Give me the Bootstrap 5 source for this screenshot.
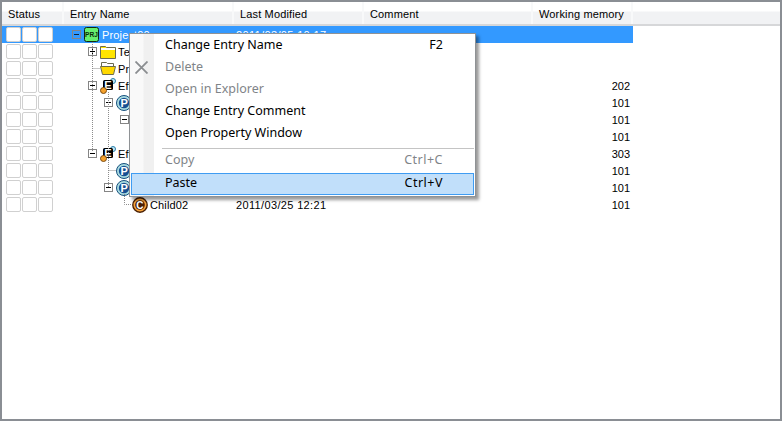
<!DOCTYPE html>
<html lang="en">
<head>
<meta charset="utf-8">
<title>Entry list</title>
<link href="https://cdn.jsdelivr.net/npm/bootstrap@5.3.0/dist/css/bootstrap.min.css" rel="stylesheet">
<style>
html,body{height:100%;}
body{background:#fff;overflow:hidden;font-family:"Liberation Sans",sans-serif;font-size:11px;letter-spacing:.15px;color:#000;line-height:18px;}
.shell{position:relative;height:421px;border:2px solid #8a8e94;}
.head-bar{height:24px;background:linear-gradient(#fff 0,#fff 9px,#f1f2f4 10px,#f1f2f4 100%);border-bottom:2px solid #d6d7d9;}
.hc{height:22px;line-height:24px;padding-left:6px;border-right:2px solid #f8f9fa;white-space:nowrap;}
.w-s{width:62px;flex:none;}
.w-n{width:170px;flex:none;}
.w-d{width:130px;flex:none;}
.w-c{width:169px;flex:none;}
.w-m{width:100px;flex:none;}
.grid-row{height:17px;width:631px;}
.grid-row.on{background:#3399ff;color:#fff;}
.stat{padding:1px 0 0 4px;gap:1px;}
.box{width:15px;height:15px;border:1px solid #d0d0d0;border-radius:2px;background:#fff;}
.tree{position:relative;gap:3px;white-space:nowrap;overflow:visible;}
.exp{width:9px;height:9px;border:1px solid #858585;background:#fff;position:relative;flex:none;}
.exp::before{content:"";position:absolute;left:1px;right:1px;top:3px;height:1px;background:#000;}
.exp.plus::after{content:"";position:absolute;top:1px;bottom:1px;left:3px;width:1px;background:#000;}
.on .exp{background:#3399ff;}
.on .exp::before{background:#123;}
.nopad{width:9px;flex:none;}
.ic{flex:none;display:block;}
.level1 .ic,.level2 .ic{margin-right:-1px;}
.num{letter-spacing:.35px;padding-left:2px;}
.memo{text-align:right;padding-right:3px;letter-spacing:0;}
.lines{position:absolute;left:0;top:0;pointer-events:none;}
.cmenu{position:absolute;left:127px;top:31px;width:347px;height:164px;background:#fff;border:1px solid #8f9295;box-shadow:3px 3px 3px rgba(0,0,0,.4);font-family:"Noto Sans",sans-serif;font-size:12.5px;letter-spacing:0;padding:1px;}
.gutter{position:absolute;left:0;top:0;bottom:0;width:24px;background:linear-gradient(90deg,#f9f9f9 0,#f9f9f9 13px,#f0f0f0 14px,#f0f0f0 100%);}
.mi{position:relative;height:22px;line-height:19px;padding:0 31px 0 34px;}
.mi.off{color:#7f8488;}
.sep{position:relative;height:1px;margin:3px 0 0 31px;background:#c4c4c4;}
.mi.cp{line-height:21px;}
.mi.act{height:22px;line-height:18px;margin-top:2px;background:#c1dffa;border:1px solid #3f9cf2;padding:0 30px 0 33px;}
.keytxt{letter-spacing:.5px;}
.xmark{position:absolute;left:5px;top:27px;}
.level0{padding-left:8px;}
.level1{padding-left:24px;}
.level2{padding-left:40px;}
.level3{padding-left:56px;}
.level3b{padding-left:68px;gap:2px;}
</style>
</head>
<body>
<div class="shell">
  <div class="head-bar d-flex">
    <div class="hc w-s">Status</div>
    <div class="hc w-n">Entry Name</div>
    <div class="hc w-d">Last Modified</div>
    <div class="hc w-c">Comment</div>
    <div class="hc w-m">Working memory</div>
  </div>
  <div>
    <div class="grid-row on d-flex">
      <div class="w-s stat d-flex"><span class="box"></span><span class="box"></span><span class="box"></span></div>
      <div class="w-n tree d-flex align-items-center level0"><span class="exp"></span><svg class="ic" width="15" height="15" viewBox="0 0 15 15"><rect x=".5" y=".5" width="14" height="14" rx="2" fill="#66f06e" stroke="#102810"/><text x="7.500" y="10" text-anchor="middle" font-family="Liberation Sans" font-weight="700" font-size="6.500" fill="#0b2a0b">PRJ</text></svg><span>Project00</span></div>
      <div class="w-d num">2011/03/05 10:17</div><div class="w-c"></div><div class="w-m memo"></div>
    </div>
    <div class="grid-row d-flex">
      <div class="w-s stat d-flex"><span class="box"></span><span class="box"></span><span class="box"></span></div>
      <div class="w-n tree d-flex align-items-center level1"><span class="exp plus"></span><svg class="ic" width="16" height="14" viewBox="0 0 16 14"><path d="M.5 1.500h5l1 1h9v11H.500z" fill="#ffe500" stroke="#6b6b50"/><path d="M1 3h14v2H1z" fill="#fff"/></svg><span>Test</span></div>
      <div class="w-d"></div><div class="w-c"></div><div class="w-m memo"></div>
    </div>
    <div class="grid-row d-flex">
      <div class="w-s stat d-flex"><span class="box"></span><span class="box"></span><span class="box"></span></div>
      <div class="w-n tree d-flex align-items-center level1"><span class="nopad"></span><svg class="ic" width="16" height="13" viewBox="0 0 16 13"><path d="M1.500 .5h5l1 1h6v4h-12z" fill="#fff" stroke="#6b6b50"/><path d="M.5 4.500h15l-2 8H2.500z" fill="#ffd800" stroke="#6b6b50"/></svg><span>Project</span></div>
      <div class="w-d"></div><div class="w-c"></div><div class="w-m memo"></div>
    </div>
    <div class="grid-row d-flex">
      <div class="w-s stat d-flex"><span class="box"></span><span class="box"></span><span class="box"></span></div>
      <div class="w-n tree d-flex align-items-center level1"><span class="exp"></span><svg class="ic" width="16" height="16" viewBox="0 0 16 16"><circle cx="13" cy="3" r="2.500" fill="#bfe6f6" stroke="#2b7ea8"/><rect x="3" y="2" width="10" height="10" rx="1.500" fill="#000"/><text x="8" y="11" text-anchor="middle" font-family="Liberation Sans" font-weight="700" font-size="11" fill="#fff">E</text><circle cx="3.500" cy="12.500" r="3" fill="#f5a12b" stroke="#7a4a10"/></svg><span>Effect00</span></div>
      <div class="w-d"></div><div class="w-c"></div><div class="w-m memo">202</div>
    </div>
    <div class="grid-row d-flex">
      <div class="w-s stat d-flex"><span class="box"></span><span class="box"></span><span class="box"></span></div>
      <div class="w-n tree d-flex align-items-center level2"><span class="exp"></span><svg class="ic" width="16" height="16" viewBox="0 0 16 16"><circle cx="8" cy="8" r="7.500" fill="#a9dbe0" stroke="#16507e"/><circle cx="8" cy="8" r="5.200" fill="#174f92"/><text x="8.200" y="12" text-anchor="middle" font-family="Liberation Sans" font-weight="700" font-size="11" fill="#fff">P</text></svg><span>Particle</span></div>
      <div class="w-d"></div><div class="w-c"></div><div class="w-m memo">101</div>
    </div>
    <div class="grid-row d-flex">
      <div class="w-s stat d-flex"><span class="box"></span><span class="box"></span><span class="box"></span></div>
      <div class="w-n tree d-flex align-items-center level3"><span class="exp"></span></div>
      <div class="w-d"></div><div class="w-c"></div><div class="w-m memo">101</div>
    </div>
    <div class="grid-row d-flex">
      <div class="w-s stat d-flex"><span class="box"></span><span class="box"></span><span class="box"></span></div>
      <div class="w-n"></div>
      <div class="w-d"></div><div class="w-c"></div><div class="w-m memo">101</div>
    </div>
    <div class="grid-row d-flex">
      <div class="w-s stat d-flex"><span class="box"></span><span class="box"></span><span class="box"></span></div>
      <div class="w-n tree d-flex align-items-center level1"><span class="exp"></span><svg class="ic" width="16" height="16" viewBox="0 0 16 16"><circle cx="13" cy="3" r="2.500" fill="#bfe6f6" stroke="#2b7ea8"/><rect x="3" y="2" width="10" height="10" rx="1.500" fill="#000"/><text x="8" y="11" text-anchor="middle" font-family="Liberation Sans" font-weight="700" font-size="11" fill="#fff">E</text><circle cx="3.500" cy="12.500" r="3" fill="#f5a12b" stroke="#7a4a10"/></svg><span>Effect01</span></div>
      <div class="w-d"></div><div class="w-c"></div><div class="w-m memo">303</div>
    </div>
    <div class="grid-row d-flex">
      <div class="w-s stat d-flex"><span class="box"></span><span class="box"></span><span class="box"></span></div>
      <div class="w-n tree d-flex align-items-center level2"><span class="nopad"></span><svg class="ic" width="16" height="16" viewBox="0 0 16 16"><circle cx="8" cy="8" r="7.500" fill="#a9dbe0" stroke="#16507e"/><circle cx="8" cy="8" r="5.200" fill="#174f92"/><text x="8.200" y="12" text-anchor="middle" font-family="Liberation Sans" font-weight="700" font-size="11" fill="#fff">P</text></svg><span>Particle</span></div>
      <div class="w-d"></div><div class="w-c"></div><div class="w-m memo">101</div>
    </div>
    <div class="grid-row d-flex">
      <div class="w-s stat d-flex"><span class="box"></span><span class="box"></span><span class="box"></span></div>
      <div class="w-n tree d-flex align-items-center level2"><span class="exp"></span><svg class="ic" width="16" height="16" viewBox="0 0 16 16"><circle cx="8" cy="8" r="7.500" fill="#a9dbe0" stroke="#16507e"/><circle cx="8" cy="8" r="5.200" fill="#174f92"/><text x="8.200" y="12" text-anchor="middle" font-family="Liberation Sans" font-weight="700" font-size="11" fill="#fff">P</text></svg><span>Particle</span></div>
      <div class="w-d"></div><div class="w-c"></div><div class="w-m memo">101</div>
    </div>
    <div class="grid-row d-flex">
      <div class="w-s stat d-flex"><span class="box"></span><span class="box"></span><span class="box"></span></div>
      <div class="w-n tree d-flex align-items-center level3b"><svg class="ic" width="16" height="16" viewBox="0 0 16 16"><circle cx="8" cy="8" r="7.200" fill="#f6a23a" stroke="#4a2004" stroke-width="1.400"/><circle cx="8" cy="8" r="4.800" fill="#4a1e04"/><text x="8" y="11.500" text-anchor="middle" font-family="Liberation Sans" font-weight="700" font-size="10" fill="#fff">C</text></svg><span>Child02</span></div>
      <div class="w-d num">2011/03/25 12:21</div><div class="w-c"></div><div class="w-m memo">101</div>
    </div>
  </div>

  <svg class="lines" width="140" height="215" viewBox="0 0 140 215" fill="none" stroke="#8c8c8c" stroke-dasharray="1 1">
    <path d="M90.500 40V150"/>
    <path d="M90.500 66.500H98"/>
    <path d="M106.500 90V185"/>
    <path d="M106.500 168.500H114"/>
    <path d="M122.500 192V202.500H130"/>
  </svg>

  <div class="cmenu">
    <div class="gutter"></div>
    <svg class="xmark" width="13" height="13" viewBox="0 0 13 13" fill="none" stroke="#8a8d90" stroke-width="1.800"><path d="M.5 .5l12 12M12.500 .5L.5 12.500"/></svg>
    <div class="mi d-flex justify-content-between"><span>Change Entry Name</span><span>F2</span></div>
    <div class="mi off">Delete</div>
    <div class="mi off">Open in Explorer</div>
    <div class="mi">Change Entry Comment</div>
    <div class="mi">Open Property Window</div>
    <div class="sep"></div>
    <div class="mi cp off d-flex justify-content-between"><span>Copy</span><span class="keytxt">Ctrl+C</span></div>
    <div class="mi act d-flex justify-content-between"><span>Paste</span><span class="keytxt">Ctrl+V</span></div>
  </div>
</div>
<script src="https://cdn.jsdelivr.net/npm/bootstrap@5.3.0/dist/js/bootstrap.bundle.min.js"></script>
</body>
</html>
